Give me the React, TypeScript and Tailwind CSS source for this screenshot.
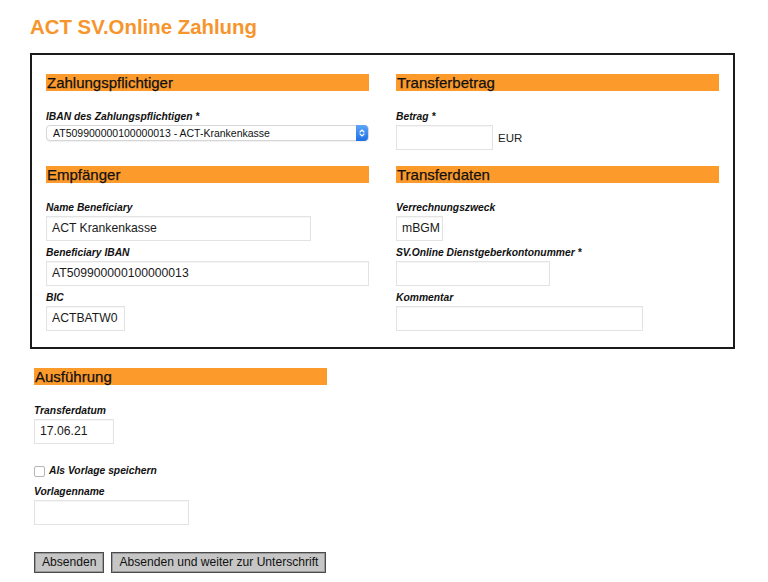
import React from 'react';

const font = { fontFamily: '"Liberation Sans", Arial, sans-serif' };

function SectionHeader({ title, className = '' }: { title: string; className?: string }) {
  return (
    <div
      className={`h-[17px] bg-[#fd9a2c] text-[15px] leading-[18px] text-[#111] pl-[1px] [-webkit-text-stroke:0.25px_#111] ${className}`}
    >
      {title}
    </div>
  );
}

function Label({ children }: { children: React.ReactNode }) {
  return <div className="text-[10.3px] leading-[12px] font-bold italic text-[#111]">{children}</div>;
}

function TextInput({ value = '', width }: { value?: string; width: string }) {
  return (
    <div
      className={`${width} h-[25px] border border-[#e3e3e3] bg-white px-[5px] text-[12.2px] leading-[23px] text-[#1a1a1a] shadow-[inset_0_1px_1px_rgba(0,0,0,0.04)]`}
    >
      {value}
    </div>
  );
}

function Field({ label, value, width }: { label: string; value?: string; width: string }) {
  return (
    <div className="flex flex-col gap-[2px]">
      <Label>{label}</Label>
      <TextInput value={value} width={width} />
    </div>
  );
}

function SelectBox() {
  return (
    <div className="flex h-[16px] w-[323px] items-center rounded-[4px] border border-[#d6d6d6] bg-white pl-[6px] shadow-[0_1px_1px_rgba(0,0,0,0.06)]">
      <span className="flex-1 text-[10.5px] leading-[14px] text-[#111]">AT509900000100000013 - ACT-Krankenkasse</span>
      <span className="flex h-[16px] w-[12px] items-center justify-center rounded-r-[4px] bg-gradient-to-b from-[#5ea6f7] to-[#1b6fe6]">
        <svg width="6" height="10" viewBox="0 0 6 10" fill="none">
          <path d="M1 4 L3 2 L5 4" stroke="white" strokeWidth="1.1" strokeLinecap="round" strokeLinejoin="round" />
          <path d="M1 6 L3 8 L5 6" stroke="white" strokeWidth="1.1" strokeLinecap="round" strokeLinejoin="round" />
        </svg>
      </span>
    </div>
  );
}

function Button({ children }: { children: React.ReactNode }) {
  return (
    <button
      type="button"
      className="h-[21px] border border-[#4a4a4a] bg-[#c6c6c6] px-[7px] text-[12.1px] leading-[19px] text-[#111] shadow-[inset_0_0_0_1px_#9a9a9a]"
    >
      {children}
    </button>
  );
}

export default function App() {
  return (
    <div className="min-h-[582px] w-[768px] bg-white pl-[30px]" style={font}>
      <h1 className="pt-[14px] text-[20.4px] font-bold leading-[26px] text-[#f7952d]">ACT SV.Online Zahlung</h1>

      <div className="mt-[13px] w-[705px] border-2 border-[#1a1a1a] px-[14px] pt-[19px] pb-[16px]">
        <div className="grid grid-cols-[323px_323px] gap-x-[27px]">
          {/* row 1 */}
          <div>
            <SectionHeader title="Zahlungspflichtiger" />
            <div className="mt-[20px] flex flex-col gap-[2px]">
              <Label>IBAN des Zahlungspflichtigen *</Label>
              <SelectBox />
            </div>
          </div>
          <div>
            <SectionHeader title="Transferbetrag" />
            <div className="mt-[20px] flex flex-col gap-[2px]">
              <Label>Betrag *</Label>
              <div className="flex items-end gap-[5px]">
                <TextInput width="w-[97px]" />
                <span className="pb-[5px] text-[11.5px] leading-[14px] text-[#222]">EUR</span>
              </div>
            </div>
          </div>

          {/* row 2 */}
          <div className="mt-[16px]">
            <SectionHeader title="Empfänger" />
            <div className="mt-[19px] flex flex-col gap-[6px]">
              <Field label="Name Beneficiary" value="ACT Krankenkasse" width="w-[265px]" />
              <Field label="Beneficiary IBAN" value="AT509900000100000013" width="w-[323px]" />
              <Field label="BIC" value="ACTBATW0" width="w-[79px]" />
            </div>
          </div>
          <div className="mt-[16px]">
            <SectionHeader title="Transferdaten" />
            <div className="mt-[19px] flex flex-col gap-[6px]">
              <Field label="Verrechnungszweck" value="mBGM" width="w-[47px]" />
              <Field label="SV.Online Dienstgeberkontonummer *" width="w-[154px]" />
              <Field label="Kommentar" width="w-[247px]" />
            </div>
          </div>
        </div>
      </div>

      <div className="pl-[4px]">
        <SectionHeader title="Ausführung" className="mt-[19px] w-[293px]" />
        <div className="mt-[20px]">
          <Field label="Transferdatum" value="17.06.21" width="w-[80px]" />
        </div>
        <label className="mt-[21px] flex items-center gap-[4px]">
          <span className="h-[11px] w-[11px] rounded-[2px] border border-[#b5b5b5] bg-white" />
          <span className="text-[10.3px] leading-[12px] font-bold italic text-[#111]">Als Vorlage speichern</span>
        </label>
        <div className="mt-[9px]">
          <Field label="Vorlagenname" width="w-[155px]" />
        </div>
        <div className="mt-[27px] flex gap-[7px]">
          <Button>Absenden</Button>
          <Button>Absenden und weiter zur Unterschrift</Button>
        </div>
      </div>
    </div>
  );
}
